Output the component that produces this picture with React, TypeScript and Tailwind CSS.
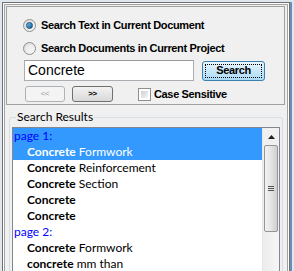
import React from "react";

const ui = { fontFamily: '"Liberation Sans", Arial, sans-serif' };
const list = { fontFamily: 'Lato, "Noto Sans", sans-serif' };

function Radio({ checked }: { checked?: boolean }) {
  return (
    <div className="flex h-[13px] w-[13px] shrink-0 items-center justify-center rounded-full border border-[#8f8f8f] bg-gradient-to-br from-[#d8d8d8] to-[#fbfbfb]">
      {checked ? (
        <div className="h-[7px] w-[7px] rounded-full border border-[#1a4e78] bg-gradient-to-br from-[#6fc6f3] to-[#0f5a96]" />
      ) : (
        <div className="h-[7px] w-[7px] rounded-full bg-gradient-to-br from-[#e6e6e6] to-[#f8f8f8]" />
      )}
    </div>
  );
}

const rows: { page?: string; bold?: string; rest?: string; sel?: boolean }[] = [
  { page: "page 1:", sel: true },
  { bold: "Concrete", rest: "Formwork", sel: true },
  { bold: "Concrete", rest: "Reinforcement" },
  { bold: "Concrete", rest: "Section" },
  { bold: "Concrete" },
  { bold: "Concrete" },
  { page: "page 2:" },
  { bold: "Concrete", rest: "Formwork" },
  { bold: "concrete", rest: "mm than" },
];

export default function App() {
  return (
    <div className="h-[271px] w-[294px] overflow-hidden bg-[#dfe6ed] pl-[2px] pt-[2px]">
      <div className="flex h-[280px] w-[290px]">
        <div className="h-full w-[288px] border border-[#6f6f6f] bg-white p-[1px]">
          <div className="h-full border border-[#a3a3a3] bg-[#f0f0f0] pl-[1px] pt-[1px]">
            {/* top options */}
            <div className="h-[99px] w-[279px] border border-[#a0a0a0] bg-[#f0f0f0] pl-[16px] pt-[12px] tracking-[-0.35px]" style={ui}>
              <div className="flex h-[13px] items-center gap-[5px] text-[11px] font-bold text-black">
                <Radio checked />
                <span>Search Text in Current Document</span>
              </div>
              <div className="mt-[10px] flex h-[13px] items-center gap-[5px] text-[11px] font-bold text-black">
                <Radio />
                <span>Search Documents in Current Project</span>
              </div>
              <div className="mt-[5px] flex items-center">
                <div className="ml-[1px] flex h-[21px] w-[170px] items-center border border-[#abadb3] border-t-[#9a9a9a] bg-white pl-[3px] text-[14px] tracking-normal text-black">
                  Concrete
                </div>
                <div className="ml-[8px] h-[20px] w-[63px] rounded-[3px] border border-[#3c7fb1] bg-gradient-to-b from-[#eaf6fd] via-[#c9e8f9] to-[#a9dbf6] p-[2px]">
                  <div className="flex h-full items-center justify-center border border-dotted border-black text-[11px] font-bold">
                    Search
                  </div>
                </div>
              </div>
              <div className="mt-[5px] flex items-center">
                <div className="ml-[2px] flex h-[16px] w-[40px] items-center justify-center rounded-[3px] border border-[#adb2b5] bg-[#f4f4f4] text-[8px] text-[#9a9a9a]">
                  &lt;&lt;
                </div>
                <div className="ml-[7px] flex h-[16px] w-[41px] items-center justify-center rounded-[3px] border border-[#707070] bg-gradient-to-b from-[#f2f2f2] to-[#d9d9d9] text-[8px] font-bold text-black">
                  &gt;&gt;
                </div>
                <div className="ml-[25px] h-[13px] w-[13px] border border-[#8e8f8f] bg-white p-[2px]">
                  <div className="h-full w-full bg-gradient-to-br from-[#cbcfd5] to-[#f6f6f6]" />
                </div>
                <span className="ml-[3px] text-[11px] font-bold text-black">Case Sensitive</span>
              </div>
            </div>

            {/* results */}
            <fieldset className="ml-[3px] mt-[4px] h-[200px] w-[274px] rounded-[3px] border border-[#d5dfe5] pl-[2px] pr-[2px]">
              <legend className="ml-[4px] px-[1px] text-[12px] leading-[16px] text-black" style={list}>
                Search Results
              </legend>
              <div className="mt-[2px] flex h-[160px] w-[268px] border border-[#828790] bg-white" style={list}>
                <div className="flex-1">
                  {rows.map((r, i) => (
                    <div
                      key={i}
                      className={`flex h-[16px] items-center text-[12px] leading-none ${r.sel ? "bg-[#3399ff]" : ""} ${r.page ? "pl-[1px]" : "pl-[14px]"}`}
                    >
                      {r.page ? (
                        <span className="text-[#0000ff]">{r.page}</span>
                      ) : (
                        <span className={r.sel ? "text-white" : "text-black"}>
                          <span className="font-bold">{r.bold}</span>
                          {r.rest ? <span> {r.rest}</span> : null}
                        </span>
                      )}
                    </div>
                  ))}
                </div>
                <div className="flex w-[17px] flex-col border-l border-[#e6e6e6] bg-[#f0f0f0]">
                  <div className="flex h-[17px] items-center justify-center">
                    <svg width="7" height="4" viewBox="0 0 7 4">
                      <path d="M0 4 L3.5 0 L7 4 Z" fill="#202020" />
                    </svg>
                  </div>
                  <div className="mx-[1px] flex h-[87px] items-center justify-center rounded-[2px] border border-[#959595] bg-gradient-to-r from-[#f2f2f2] via-[#e4e4e4] to-[#cfcfcf]">
                    <div className="flex flex-col gap-[1px]">
                      <div className="h-[1px] w-[6px] bg-[#555]" />
                      <div className="h-[1px] w-[6px] bg-[#555]" />
                      <div className="h-[1px] w-[6px] bg-[#555]" />
                    </div>
                  </div>
                  <div className="flex-1 bg-gradient-to-r from-[#ececec] to-[#f6f6f6]" />
                </div>
              </div>
            </fieldset>
          </div>
        </div>
        <div className="h-full w-[2px] bg-[#6d8fb3]" />
      </div>
    </div>
  );
}
